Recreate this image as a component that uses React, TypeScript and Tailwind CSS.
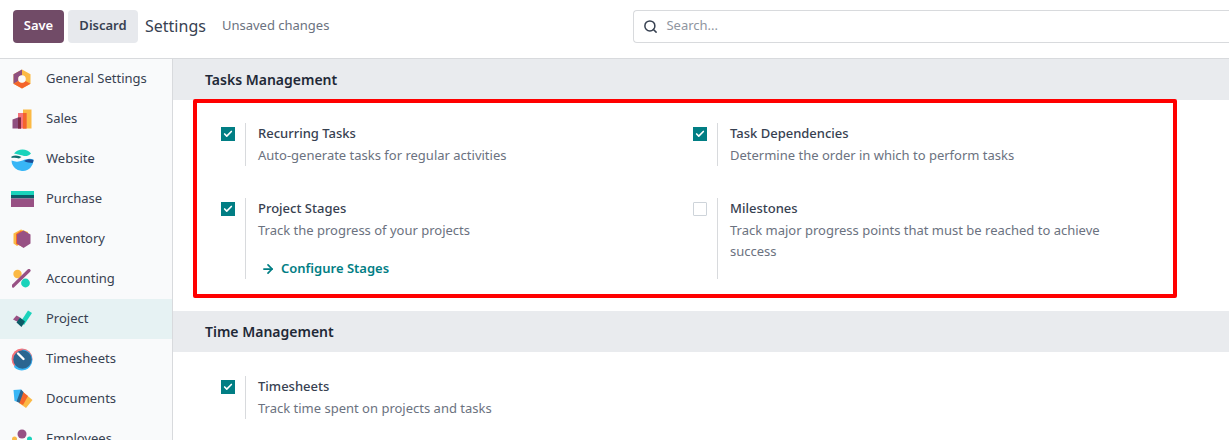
import { Check, ArrowRight, Search } from 'lucide-react';
import type { ReactNode } from 'react';

function GeneralIcon() {
  return (
    <svg width="20" height="20" viewBox="0 0 20 20">
      <path d="M10 0.5 18.5 5.2V14.8L10 19.5 1.5 14.8V5.2Z" fill="#FBB945" />
      <path d="M1.5 5.2 10 0.5V6.2L6.5 8V12L1.5 14.8Z" fill="#8F4F7F" />
      <path d="M1.5 14.8 6.5 12 10 14 13.5 12 18.5 14.8 10 19.5Z" fill="#F4652B" />
      <circle cx="10" cy="10" r="3.8" fill="#f9fafb" />
    </svg>
  );
}

function SalesIcon() {
  return (
    <svg width="20" height="20" viewBox="0 0 20 20">
      <rect x="11" y="0.5" width="8.5" height="19" fill="#FBB945" />
      <rect x="6" y="4" width="8.5" height="15.5" fill="#F4727A" />
      <rect x="11" y="4" width="3.5" height="15.5" fill="#F4652B" />
      <path d="M0.5 10.5 6 8.5H9V19.5H0.5Z" fill="#8F4F7F" />
      <rect x="6" y="8.5" width="3" height="11" fill="#7A2A45" />
    </svg>
  );
}

function WebsiteIcon() {
  return (
    <svg width="23" height="23" viewBox="0 0 23 23">
      <path d="M3 5.5A11 11 0 0 1 20 5.5C17 8.5 14 8.5 11.5 7.5 8.5 6.5 6 6.5 3 5.5Z" fill="#1AD3BB" />
      <path d="M0.5 8.5C4 6.5 8 7.5 10.5 9L8 10.5C5.5 9.5 3 9.5 0.5 10Z" fill="#0F6E6E" />
      <path d="M0.5 12.5C4 14 8 14 11.5 12.5 15 11 19 10 22.5 11.5A11 11 0 0 1 0.5 12.5Z" fill="#38B6F6" />
      <path d="M13 13C16 11 19.5 11 22.5 12 22.5 13.5 22 14.5 21.5 15 18.5 14.5 16 14.5 13 13Z" fill="#1C4E96" />
    </svg>
  );
}

function PurchaseIcon() {
  return (
    <svg width="23" height="16" viewBox="0 0 23 16">
      <rect width="23" height="4" fill="#1AD3BB" />
      <rect y="4" width="23" height="3.5" fill="#0B5A66" />
      <rect y="7.5" width="23" height="8.5" fill="#985184" />
    </svg>
  );
}

function InventoryIcon() {
  return (
    <svg width="18" height="20" viewBox="0 0 18 20">
      <path d="M8 0.5 15 3V9L4 17 0.5 14.5V4.5Z" fill="#FBB945" />
      <path d="M7.5 2 12 3 10 18 3 15V5Z" fill="#F4652B" />
      <path d="M10.5 1.5 17.5 5.5V14.5L10.5 19 4 14.5V5.5Z" fill="#985184" />
    </svg>
  );
}

function AccountingIcon() {
  return (
    <svg width="20" height="20" viewBox="0 0 20 20">
      <circle cx="5.5" cy="5" r="4.2" fill="#FBB945" />
      <circle cx="13.5" cy="14" r="4.4" fill="#1AD3BB" />
      <path d="M1 17 17 1.5" stroke="#985184" strokeWidth="3.2" strokeLinecap="round" />
    </svg>
  );
}

function ProjectIcon() {
  return (
    <svg width="20" height="18" viewBox="0 0 20 18">
      <path d="M8.5 12 16 0.5 20 3 12 15Z" fill="#1AD3BB" />
      <path d="M4.5 5.5 8 7.5 6 12 1 9.5Z" fill="#985184" />
      <path d="M8 7.5 13 11.5 9.5 17 4.5 12.5Z" fill="#0B5A66" />
    </svg>
  );
}

function TimesheetsIcon() {
  return (
    <svg width="23" height="23" viewBox="0 0 23 23">
      <circle cx="11" cy="11" r="10.5" fill="#F4727A" />
      <path d="M11.5 1.5A10.5 10.5 0 1 1 3 19Z" fill="#38B6F6" />
      <circle cx="11.5" cy="11.5" r="9.2" fill="#2B6590" />
      <path d="M7 5.5 12.5 11" stroke="#fff" strokeWidth="2.4" strokeLinecap="round" />
    </svg>
  );
}

function DocumentsIcon() {
  return (
    <svg width="21" height="20" viewBox="0 0 21 20">
      <path d="M1.5 1 9 0.5 14 8 7 13 2.5 12Z" fill="#38B6F6" />
      <path d="M11 3 20.5 11 14 19 7 14Z" fill="#FBB945" />
      <path d="M11 3 16 7 11 16 7 14Z" fill="#F4652B" />
      <path d="M9 0.5 11.5 3 7.5 14 4.5 12.5Z" fill="#2B6590" />
    </svg>
  );
}

function EmployeesIcon() {
  return (
    <svg width="20" height="20" viewBox="0 0 20 20">
      <circle cx="10" cy="5" r="4.5" fill="#985184" />
      <circle cx="2.5" cy="10" r="2.5" fill="#FBB945" />
      <circle cx="17.5" cy="10" r="2.5" fill="#1AD3BB" />
      <path d="M5.5 12H14.5V20H5.5Z" fill="#985184" />
    </svg>
  );
}

const apps: { label: string; icon: ReactNode; active?: boolean }[] = [
  { label: 'General Settings', icon: <GeneralIcon /> },
  { label: 'Sales', icon: <SalesIcon /> },
  { label: 'Website', icon: <WebsiteIcon /> },
  { label: 'Purchase', icon: <PurchaseIcon /> },
  { label: 'Inventory', icon: <InventoryIcon /> },
  { label: 'Accounting', icon: <AccountingIcon /> },
  { label: 'Project', icon: <ProjectIcon />, active: true },
  { label: 'Timesheets', icon: <TimesheetsIcon /> },
  { label: 'Documents', icon: <DocumentsIcon /> },
  { label: 'Employees', icon: <EmployeesIcon /> },
];

function Box({ checked }: { checked?: boolean }) {
  return checked ? (
    <span className="flex h-[14px] w-[14px] items-center justify-center bg-[#017e84]">
      <Check size={10} strokeWidth={4} className="text-white" />
    </span>
  ) : (
    <span className="block h-[14px] w-[14px] rounded-[1px] border border-[#ced4da] bg-white" />
  );
}

function Setting({ title, desc, checked, children }: { title: string; desc: string; checked?: boolean; children?: ReactNode }) {
  return (
    <div className="flex">
      <div className="w-[24px] shrink-0 pt-[4px]"><Box checked={checked} /></div>
      <div className="min-w-0 flex-1 border-l border-[#d8dadd] pl-[12px] text-[13px] leading-[21px]">
        <div className="font-medium text-[#374151]">{title}</div>
        <div className="mt-[1px] text-[#6b7280]">{desc}</div>
        {children}
      </div>
    </div>
  );
}

export default function App() {
  return (
    <div className="flex h-[440px] w-[1229px] flex-col overflow-hidden bg-white font-['Noto_Sans',sans-serif]">
      {/* control panel */}
      <div className="flex h-[59px] shrink-0 items-center border-b border-[#d8dadd] pb-[6px] pl-[13px]">
        <button className="h-[33px] w-[51px] rounded-[4px] bg-[#714b67] text-[13px] font-semibold text-white">Save</button>
        <button className="ml-[4px] h-[33px] w-[70px] rounded-[4px] bg-[#e7e9ed] text-[13px] font-semibold text-[#374151]">Discard</button>
        <span className="ml-[7px] text-[16px] text-[#374151]">Settings</span>
        <span className="ml-[16px] text-[13px] text-[#6b7280]">Unsaved changes</span>
        <div className="ml-[304px] flex h-[33px] flex-1 items-center rounded-l-[4px] border border-r-0 border-[#d8dadd] pl-[9px]">
          <Search size={15} strokeWidth={2.4} className="text-[#374151]" />
          <span className="ml-[8px] text-[13px] text-[#8f96a1]">Search...</span>
        </div>
      </div>

      <div className="flex min-h-0 flex-1">
        {/* apps */}
        <div className="w-[173px] shrink-0 overflow-hidden border-r border-[#d8dadd] bg-[#f9fafb]">
          {apps.map(app => (
            <div key={app.label} className={`flex h-[40px] items-center ${app.active ? 'bg-[#e6f2f3]' : ''}`}>
              <div className="flex w-[46px] shrink-0 justify-center pl-[2px] pr-[4px]">{app.icon}</div>
              <span className="text-[13px] text-[#374151]">{app.label}</span>
            </div>
          ))}
        </div>

        {/* settings */}
        <div className="min-w-0 flex-1">
          <div className="flex h-[41px] items-center bg-[#e9ebee] pl-[32px] text-[14px] font-semibold text-[#1f2937]">Tasks Management</div>
          <div className="ml-[20px] mr-[52px] grid h-[199px] -mt-[1px] grid-cols-[472px_1fr] content-start gap-y-[32px] rounded-[2px] border-[4px] border-[#ff0000] pl-[24px] pr-[24px] pt-[20px]">
            <Setting checked title="Recurring Tasks" desc="Auto-generate tasks for regular activities" />
            <Setting checked title="Task Dependencies" desc="Determine the order in which to perform tasks" />
            <Setting checked title="Project Stages" desc="Track the progress of your projects">
              <div className="mt-[17px] flex items-center pl-[3px] font-semibold text-[#017e84]">
                <ArrowRight size={14} strokeWidth={3} />
                <span className="ml-[6px]">Configure Stages</span>
              </div>
            </Setting>
            <Setting title="Milestones" desc="Track major progress points that must be reached to achieve success" />
          </div>
          <div className="mt-[13px] flex h-[41px] items-center bg-[#e9ebee] pl-[32px] text-[14px] font-semibold text-[#1f2937]">Time Management</div>
          <div className="w-[520px] pl-[48px] pt-[24px]">
            <Setting checked title="Timesheets" desc="Track time spent on projects and tasks" />
          </div>
        </div>
      </div>
    </div>
  );
}
